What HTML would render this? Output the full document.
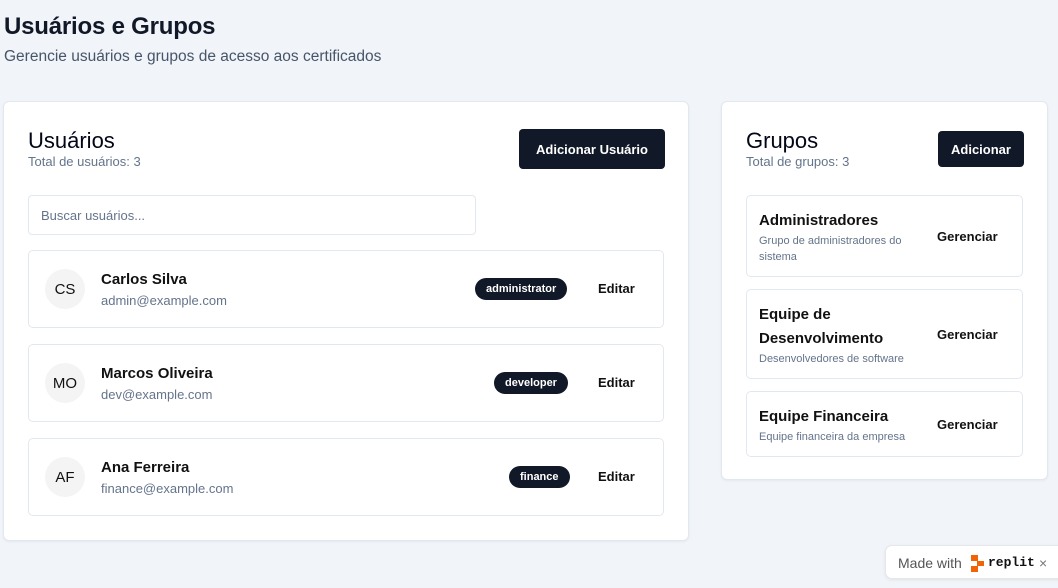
<!DOCTYPE html>
<html><head><meta charset="utf-8"><style>
*{box-sizing:border-box;margin:0;padding:0}
body{width:1058px;height:588px;background:#f1f4f9;font-family:"Liberation Sans",sans-serif;color:#0f172a;position:relative;overflow:hidden}
h1{position:absolute;left:4px;top:13px;font-size:24px;font-weight:bold;color:#111827;letter-spacing:-0.2px}
.sub{position:absolute;left:4px;top:48px;font-size:15.5px;color:#475569}
.card{position:absolute;background:#fff;border:1px solid #e2e8f0;border-radius:6px;box-shadow:0 1px 2px rgba(0,0,0,.05)}
.btn{position:absolute;background:#111827;color:#fff;font-weight:bold;font-size:13px;border-radius:4px;display:flex;align-items:center;justify-content:center}
.ttl{position:absolute;font-size:22px;color:#020617}
.cnt{position:absolute;font-size:13px;color:#64748b}
.row{position:absolute;left:24px;width:636px;height:78px;border:1px solid #e2e8f0;border-radius:5px}
.av{position:absolute;left:16px;top:18px;width:40px;height:40px;border-radius:50%;background:#f4f4f5;font-size:15px;display:flex;align-items:center;justify-content:center;color:#111}
.nm{position:absolute;left:72px;top:20px;font-size:15px;font-weight:bold;color:#111}
.em{position:absolute;left:72px;top:42px;font-size:13px;color:#64748b}
.bd{position:absolute;top:27px;height:22px;border-radius:11px;background:#111827;color:#fff;font-size:11px;font-weight:bold;padding:0 11px;display:flex;align-items:center}
.ed{position:absolute;left:569px;top:30px;font-size:13px;font-weight:bold;color:#111}
.g{position:absolute;left:24px;width:277px;border:1px solid #e2e8f0;border-radius:5px}
.gn{position:absolute;left:12px;font-size:15px;font-weight:bold;color:#111;line-height:24px}
.gd{position:absolute;left:12px;font-size:11px;color:#64748b;line-height:16px;width:165px}
.gm{position:absolute;left:190px;font-size:13px;font-weight:bold;color:#111}
</style></head><body>
<h1>Usuários e Grupos</h1>
<div class="sub">Gerencie usuários e grupos de acesso aos certificados</div>

<div class="card" style="left:3px;top:101px;width:686px;height:440px">
  <div class="ttl" style="left:24px;top:26px">Usuários</div>
  <div class="cnt" style="left:24px;top:52px">Total de usuários: 3</div>
  <div class="btn" style="left:515px;top:27px;width:146px;height:40px">Adicionar Usuário</div>
  <div style="position:absolute;left:24px;top:93px;width:448px;height:40px;border:1px solid #e2e8f0;border-radius:4px;font-size:13px;color:#64748b;padding:12px 12px">Buscar usuários...</div>
  <div class="row" style="top:148px"><div class="av">CS</div><div class="nm">Carlos Silva</div><div class="em">admin@example.com</div><div class="bd" style="left:446px">administrator</div><div class="ed">Editar</div></div>
  <div class="row" style="top:242px"><div class="av">MO</div><div class="nm">Marcos Oliveira</div><div class="em">dev@example.com</div><div class="bd" style="left:465px">developer</div><div class="ed">Editar</div></div>
  <div class="row" style="top:336px"><div class="av">AF</div><div class="nm">Ana Ferreira</div><div class="em">finance@example.com</div><div class="bd" style="left:480px">finance</div><div class="ed">Editar</div></div>
</div>

<div class="card" style="left:721px;top:101px;width:327px;height:379px">
  <div class="ttl" style="left:24px;top:26px">Grupos</div>
  <div class="cnt" style="left:24px;top:52px">Total de grupos: 3</div>
  <div class="btn" style="left:216px;top:29px;width:86px;height:36px">Adicionar</div>
  <div class="g" style="top:93px;height:82px"><div class="gn" style="top:13px">Administradores</div><div class="gd" style="top:37px">Grupo de administradores do sistema</div><div class="gm" style="top:33px">Gerenciar</div></div>
  <div class="g" style="top:187px;height:90px"><div class="gn" style="top:13px">Equipe de<br>Desenvolvimento</div><div class="gd" style="top:61px">Desenvolvedores de software</div><div class="gm" style="top:37px">Gerenciar</div></div>
  <div class="g" style="top:289px;height:66px"><div class="gn" style="top:13px">Equipe Financeira</div><div class="gd" style="top:37px">Equipe financeira da empresa</div><div class="gm" style="top:25px">Gerenciar</div></div>
</div>

<div style="position:absolute;left:885px;top:545px;width:180px;height:34px;background:#fff;border:1px solid #e5e7eb;border-radius:7px;box-shadow:0 1px 3px rgba(0,0,0,.08)">
  <span style="position:absolute;left:12px;top:9px;font-size:14px;color:#555">Made with</span>
  <svg style="position:absolute;left:85px;top:9px" width="13" height="17" viewBox="0 0 13 17"><rect x="0" y="0" width="7" height="6" fill="#f26207"/><rect x="6" y="6" width="7" height="5" fill="#f26207"/><rect x="0" y="11" width="7" height="6" fill="#f26207"/></svg>
  <span style="position:absolute;left:102px;top:9px;font-size:13px;font-weight:bold;font-family:'Liberation Mono',monospace;color:#111">replit</span>
  <span style="position:absolute;left:153px;top:9px;font-size:14px;color:#777">×</span>
</div>
</body></html>
